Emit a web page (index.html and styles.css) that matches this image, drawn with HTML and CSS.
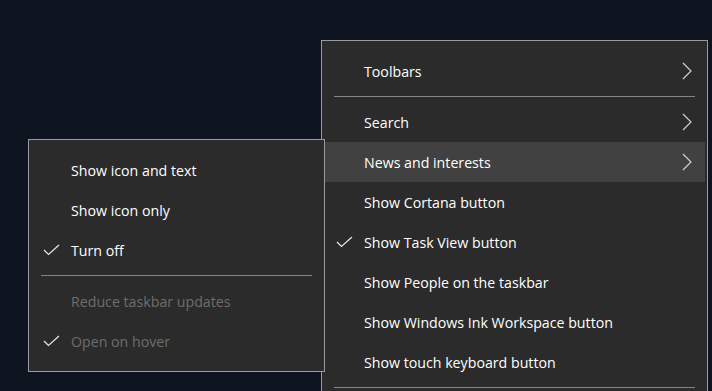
FILE: index.html
```html
<!DOCTYPE html>
<html lang="en">
<head>
    <meta charset="UTF-8">
    <title>Taskbar menu</title>
    <link rel="stylesheet" href="styles.css">
</head>
<body>
<div class="desktop">
    <ul class="menu main">
        <li class="item">Toolbars
            <svg class="arrow" width="10" height="18" viewBox="0 0 10 18"><path d="M1 1 L9 9 L1 17" fill="none" stroke="#d0d0d0" stroke-width="1.2"/></svg>
        </li>
        <li class="sep"></li>
        <li class="item">Search
            <svg class="arrow" width="10" height="18" viewBox="0 0 10 18"><path d="M1 1 L9 9 L1 17" fill="none" stroke="#d0d0d0" stroke-width="1.2"/></svg>
        </li>
        <li class="item hover">News and interests
            <svg class="arrow" width="10" height="18" viewBox="0 0 10 18"><path d="M1 1 L9 9 L1 17" fill="none" stroke="#d0d0d0" stroke-width="1.2"/></svg>
        </li>
        <li class="item">Show Cortana button</li>
        <li class="item">
            <svg class="check" width="17" height="12" viewBox="0 0 17 12"><path d="M1 6 L5.5 10.5 L16 1" fill="none" stroke="#e8e8e8" stroke-width="1.2"/></svg>
            Show Task View button
        </li>
        <li class="item">Show People on the taskbar</li>
        <li class="item">Show Windows Ink Workspace button</li>
        <li class="item">Show touch keyboard button</li>
        <li class="sep"></li>
    </ul>

    <ul class="menu sub">
        <li class="item">Show icon and text</li>
        <li class="item">Show icon only</li>
        <li class="item">
            <svg class="check" width="17" height="12" viewBox="0 0 17 12"><path d="M1 6 L5.5 10.5 L16 1" fill="none" stroke="#e8e8e8" stroke-width="1.2"/></svg>
            Turn off
        </li>
        <li class="sep"></li>
        <li class="item off">Reduce taskbar updates</li>
        <li class="item off">
            <svg class="check" width="17" height="12" viewBox="0 0 17 12"><path d="M1 6 L5.5 10.5 L16 1" fill="none" stroke="#e8e8e8" stroke-width="1.2"/></svg>
            Open on hover
        </li>
    </ul>
</div>
</body>
</html>
```

FILE: styles.css
```css
* {
    margin: 0;
    padding: 0;
    list-style: none;
    box-sizing: border-box;
}

html, body {
    width: 712px;
    height: 391px;
    overflow: hidden;
    background: #0f1520;
}

.desktop {
    position: relative;
    width: 712px;
    height: 391px;
    overflow: hidden;
}

.menu {
    position: absolute;
    background: #2b2b2b;
    border: 1px solid #9a9a9a;
    padding: 10px 0;
    font-family: "Open Sans", "Noto Sans", sans-serif;
    font-size: 14.2px;
    color: #fff;
}

.main {
    left: 321px;
    top: 40px;
    width: 387px;
    padding-bottom: 40px;
}

.sub {
    left: 28px;
    top: 139px;
    width: 297px;
    height: 233px;
}

.item {
    position: relative;
    display: flex;
    align-items: center;
    height: 40px;
    padding-left: 42px;
    white-space: nowrap;
}

.main .item {
    margin-right: 2px;
}

.item.hover {
    background: #414141;
}

.item.off {
    color: #6e6e6e;
}

.sep {
    height: 1px;
    background: #858585;
    margin: 5px 12px;
}

.arrow {
    position: absolute;
    right: 13px;
    top: 11px;
}

.check {
    position: absolute;
    left: 14px;
    top: 14px;
}
```
